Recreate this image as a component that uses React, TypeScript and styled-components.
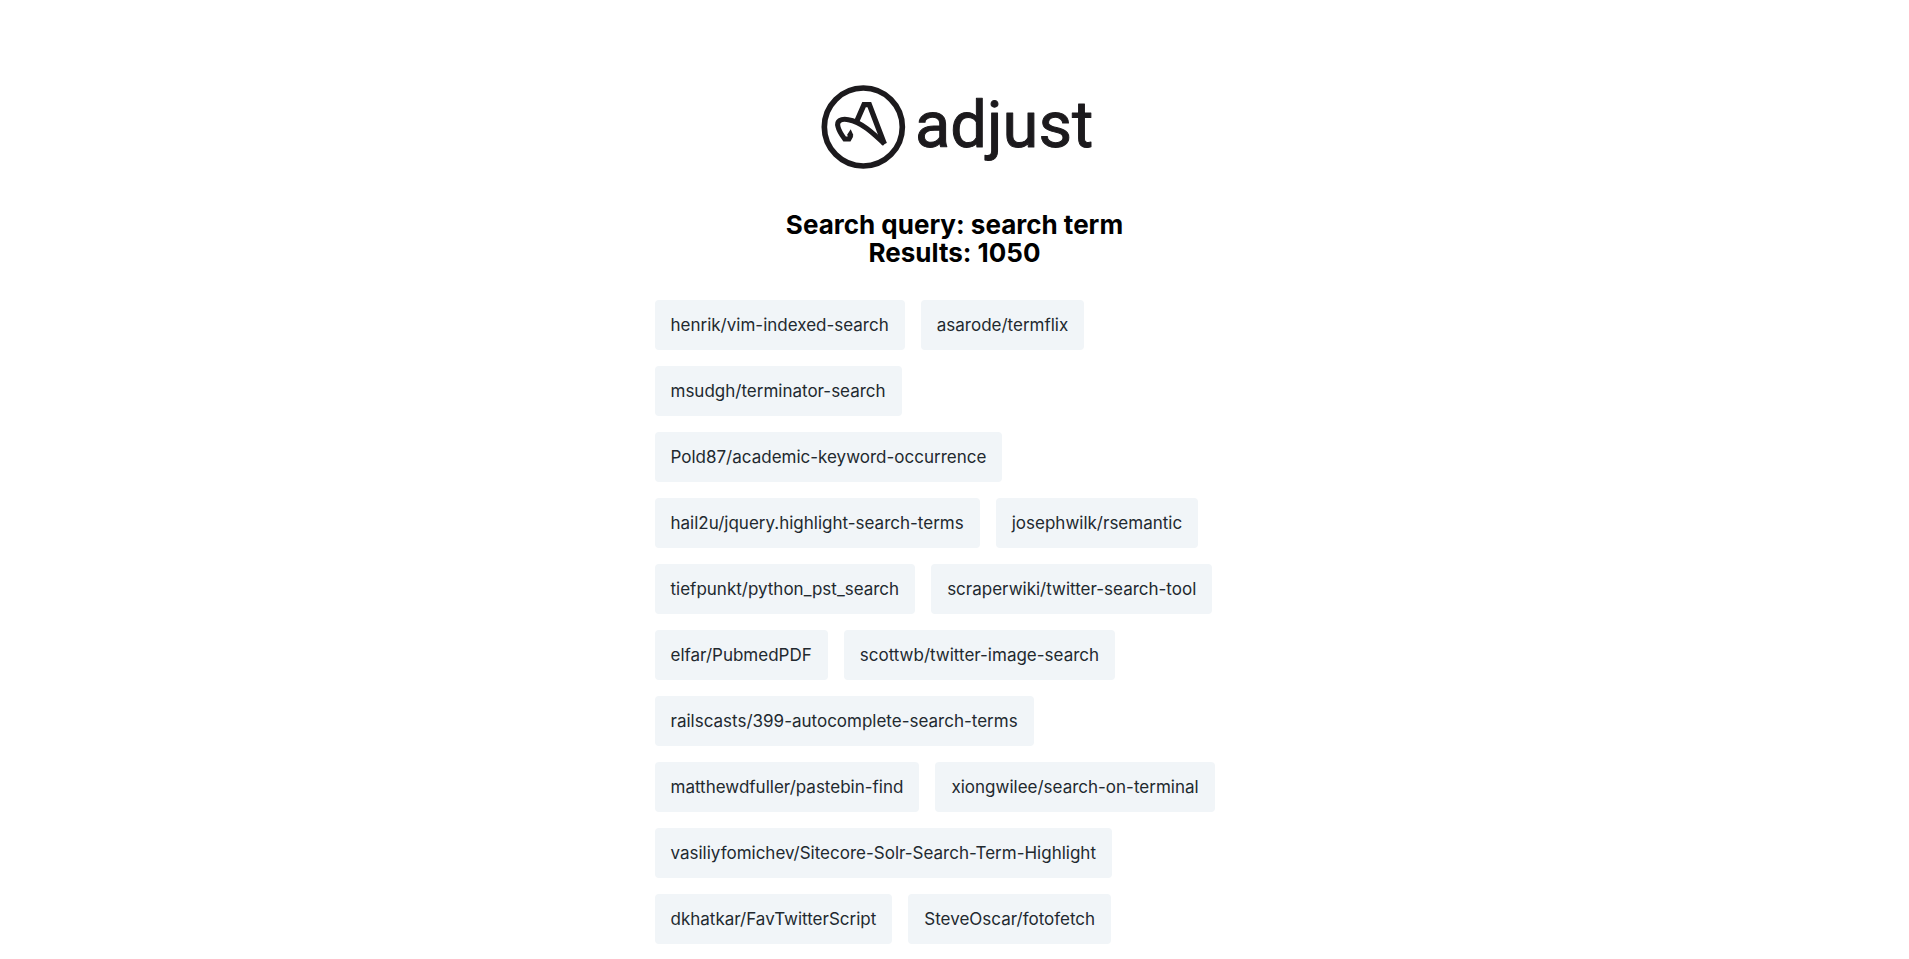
import React from "react";
import styled, { createGlobalStyle } from "styled-components";

const GlobalStyle = createGlobalStyle`
  body {
    margin: 0;
    background: #ffffff;
    font-family: Inter, Roboto, sans-serif;
  }
`;

const Page = styled.main`
  display: flex;
  flex-direction: column;
  align-items: center;
  padding: 84px 16px 0;
`;

const Logo = styled.svg`
  display: block;
  width: 276px;
  height: 86px;
  overflow: visible;
`;

const Wordmark = styled.text`
  font-family: Roboto, sans-serif;
  font-size: 195px;
  fill: #1c1a1d;
  stroke: #1c1a1d;
  stroke-width: 3px;
  stroke-linejoin: round;
`;

const Summary = styled.h1`
  margin: 41px 0 33px;
  color: #000000;
  font-size: 26px;
  font-weight: 700;
  line-height: 28px;
  text-align: center;
`;

const SummaryLine = styled.span`
  display: block;
`;

const RepoList = styled.ul`
  display: flex;
  flex-wrap: wrap;
  box-sizing: border-box;
  width: 100%;
  max-width: 600px;
  margin: 0;
  padding: 0;
  list-style: none;
`;

const RepoItem = styled.li`
  margin: 0 16px 16px 0;
  padding: 16px;
  border-radius: 4px;
  background: #f1f5f8;
  color: #22292f;
  font-size: 17px;
  line-height: 18px;
`;

const repos = [
  "henrik/vim-indexed-search",
  "asarode/termflix",
  "msudgh/terminator-search",
  "Pold87/academic-keyword-occurrence",
  "hail2u/jquery.highlight-search-terms",
  "josephwilk/rsemantic",
  "tiefpunkt/python_pst_search",
  "scraperwiki/twitter-search-tool",
  "elfar/PubmedPDF",
  "scottwb/twitter-image-search",
  "railscasts/399-autocomplete-search-terms",
  "matthewdfuller/pastebin-find",
  "xiongwilee/search-on-terminal",
  "vasiliyfomichev/Sitecore-Solr-Search-Term-Highlight",
  "dkhatkar/FavTwitterScript",
  "SteveOscar/fotofetch",
];

function AdjustLogo() {
  return (
    <Logo viewBox="-10 0 828 258" role="img" aria-label="adjust">
      <g fill="none" stroke="#1c1a1d">
        <circle cx="129" cy="129" r="117" strokeWidth="17" />
        <path
          d="M192 180 L147 62 L131 62 L107 117"
          strokeWidth="16"
        />
        <path
          d="M193 180 C158 147 122 113 84 107 C60 103 48 112 53 128 C56 142 65 154 73 165 L86 165 L92 154"
          strokeWidth="15"
        />
        <path d="M91 136 L99 153 L92 166 L80 153 Z" fill="#1c1a1d" stroke="none" />
      </g>
      <Wordmark x="284" y="188">adjust</Wordmark>
    </Logo>
  );
}

export default function App() {
  return (
    <>
      <GlobalStyle />
      <Page>
        <AdjustLogo />
        <Summary>
          <SummaryLine>Search query: search term</SummaryLine>
          <SummaryLine>Results: 1050</SummaryLine>
        </Summary>
        <RepoList>
          {repos.map((repo) => (
            <RepoItem key={repo}>{repo}</RepoItem>
          ))}
        </RepoList>
      </Page>
    </>
  );
}
